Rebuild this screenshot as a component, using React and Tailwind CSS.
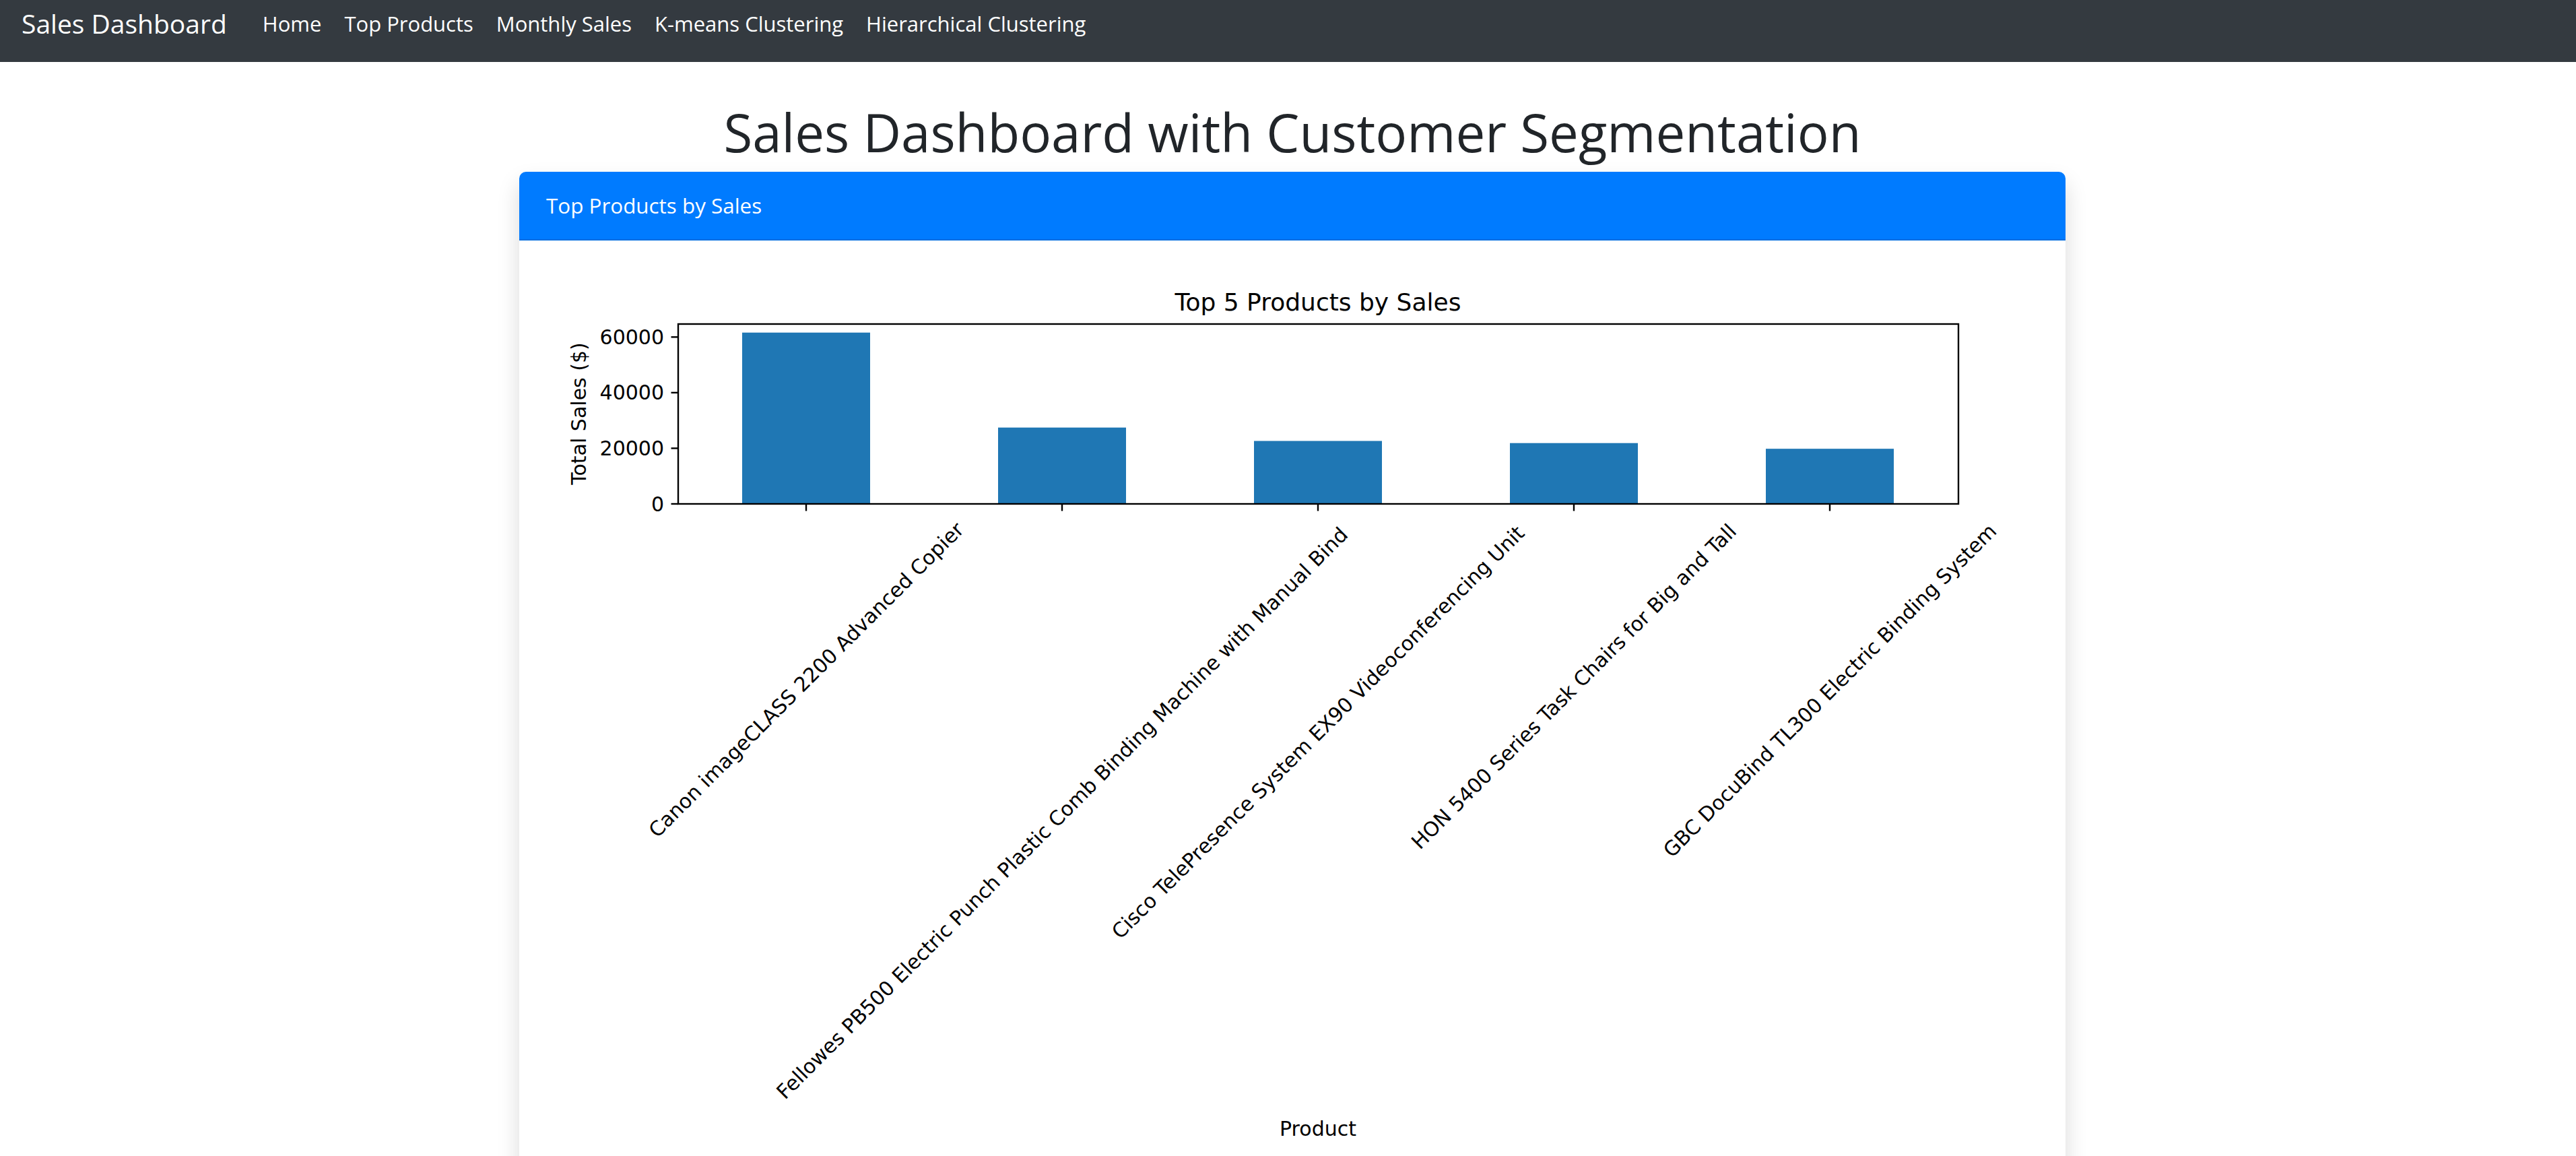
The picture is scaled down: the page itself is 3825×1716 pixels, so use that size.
const navLinks = ["Home", "Top Products", "Monthly Sales", "K-means Clustering", "Hierarchical Clustering"];

const products = [
  { name: "Canon imageCLASS 2200 Advanced Copier", sales: 61599.82, labelY: 611 },
  { name: "Fellowes PB500 Electric Punch Plastic Comb Binding Machine with Manual Bind", sales: 27453.38, labelY: 809 },
  { name: "Cisco TelePresence System EX90 Videoconferencing Unit", sales: 22638.48, labelY: 689 },
  { name: "HON 5400 Series Task Chairs for Big and Tall", sales: 21870.58, labelY: 621 },
  { name: "GBC DocuBind TL300 Electric Binding System", sales: 19823.48, labelY: 627 },
];

// axes box inside the figure, in px
const AX = { left: 196, right: 2097, top: 83, bottom: 350 };
const yMax = 61599.82 * 1.05;
const yScale = (v) => AX.bottom - (v / yMax) * (AX.bottom - AX.top);
const step = 380;
const barW = 190;
const firstX = 386;
const mpl = "'DejaVu Sans', sans-serif";

const SalesChart = () => (
  <svg width="2213" height="1420" viewBox="0 0 2213 1420" className="block">
    <text x="1146" y="63" textAnchor="middle" fontSize="36" fontFamily={mpl} fill="#000">
      Top 5 Products by Sales
    </text>

    {products.map((p, i) => {
      const cx = firstX + step * i;
      const top = yScale(p.sales);
      return (
        <rect key={p.name} x={cx - barW / 2} y={top} width={barW} height={AX.bottom - top} fill="#1f77b4" />
      );
    })}

    <rect
      x={AX.left}
      y={AX.top}
      width={AX.right - AX.left}
      height={AX.bottom - AX.top}
      fill="none"
      stroke="#000"
      strokeWidth="2.4"
    />

    {[0, 20000, 40000, 60000].map((v) => (
      <g key={v}>
        <line x1={AX.left - 10.5} x2={AX.left} y1={yScale(v)} y2={yScale(v)} stroke="#000" strokeWidth="2.4" />
        <text
          x={AX.left - 21}
          y={yScale(v)}
          textAnchor="end"
          dominantBaseline="central"
          fontSize="30"
          fontFamily={mpl}
          fill="#000"
        >
          {v}
        </text>
      </g>
    ))}

    <text
      x="48"
      y="216"
      textAnchor="middle"
      dominantBaseline="central"
      fontSize="30"
      fontFamily={mpl}
      fill="#000"
      transform="rotate(-90 48 216)"
    >
      Total Sales ($)
    </text>

    {products.map((p, i) => {
      const cx = firstX + step * i;
      return (
        <g key={p.name + "-tick"}>
          <line x1={cx} x2={cx} y1={AX.bottom} y2={AX.bottom + 10.5} stroke="#000" strokeWidth="2.4" />
          <text
            x={cx}
            y={p.labelY}
            textAnchor="middle"
            dominantBaseline="central"
            fontSize="30"
            fontFamily={mpl}
            fill="#000"
            transform={`rotate(-45 ${cx} ${p.labelY})`}
          >
            {p.name}
          </text>
        </g>
      );
    })}

    <text x="1146" y="1288" textAnchor="middle" fontSize="30" fontFamily={mpl} fill="#000">
      Product
    </text>
  </svg>
);

export default function App() {
  return (
    <div className="h-[1716px] overflow-hidden bg-white font-['Open_Sans',sans-serif] text-[#212529]">
      {/* Navbar */}
      <nav className="h-[92px] bg-[#343a40] flex items-start px-[32px]">
        <span className="mt-[15px] mr-[36px] text-[39px] leading-none text-white">Sales Dashboard</span>
        <ul className="flex mt-[20px]">
          {navLinks.map((l) => (
            <li key={l} className="px-[17px] text-[31px] leading-none text-white">
              {l}
            </li>
          ))}
        </ul>
      </nav>

      <div className="flex justify-center pl-[13px]">
        <div className="w-[2296px]">
          <h1 className="mt-[65px] mb-[20px] text-center text-[78px] leading-none font-normal text-[#212529]">
            Sales Dashboard with Customer Segmentation
          </h1>

          {/* Card */}
          <div className="rounded-[10px] bg-white shadow-[0_17px_33px_rgba(0,0,0,0.15)]">
            <div className="h-[102px] flex items-center px-[40px] bg-[#007bff] rounded-t-[10px] border-b-2 border-[#006ce0] text-white text-[31.4px] leading-none">
              Top Products by Sales
            </div>
            <div className="pt-[41px] pl-[40px]">
              <SalesChart />
            </div>
          </div>
        </div>
      </div>
    </div>
  );
}
